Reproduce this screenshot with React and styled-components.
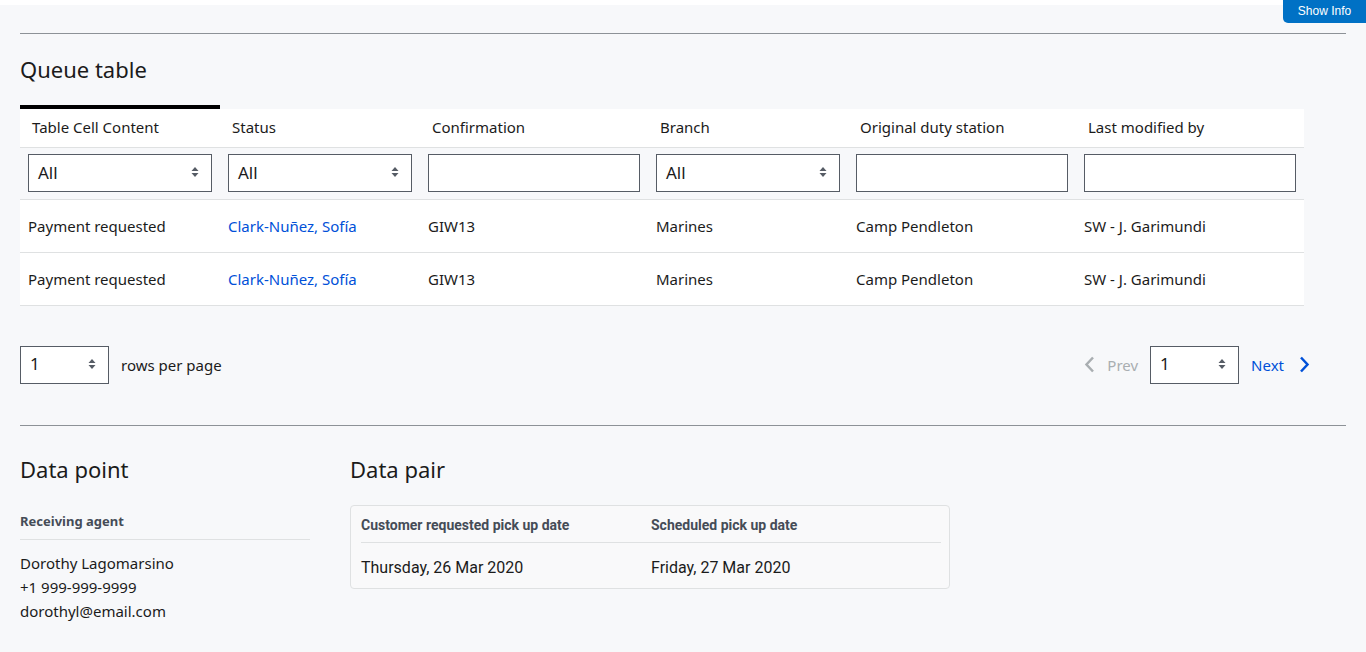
import styled, { createGlobalStyle } from "styled-components";

const GlobalStyle = createGlobalStyle`
  html, body {
    margin: 0;
    padding: 0;
    background: #f7f8fa;
    font-family: "Noto Sans", Inter, sans-serif;
    color: #1b1b1b;
  }
  * { box-sizing: border-box; }
`;

const columns = [
  { label: "Table Cell Content", width: 200, filter: "select", active: true },
  { label: "Status", width: 200, filter: "select" },
  { label: "Confirmation", width: 228, filter: "text" },
  { label: "Branch", width: 200, filter: "select" },
  { label: "Original duty station", width: 228, filter: "text" },
  { label: "Last modified by", width: 228, filter: "text" },
];

const rows = [
  ["Payment requested", "Clark-Nuñez, Sofía", "GIW13", "Marines", "Camp Pendleton", "SW - J. Garimundi"],
  ["Payment requested", "Clark-Nuñez, Sofía", "GIW13", "Marines", "Camp Pendleton", "SW - J. Garimundi"],
];

const Arrows = () => (
  <svg width="8" height="12" viewBox="0 0 8 12">
    <path d="M4 1 L7.5 5 L0.5 5 Z" fill="#565c65" />
    <path d="M4 11 L7.5 7 L0.5 7 Z" fill="#565c65" />
  </svg>
);

const Chevron = ({ dir, color }) => (
  <svg width="11" height="17" viewBox="0 0 11 17">
    <path
      d={dir === "left" ? "M9 1.5 L2.5 8.5 L9 15.5" : "M2 1.5 L8.5 8.5 L2 15.5"}
      fill="none"
      stroke={color}
      strokeWidth="2.5"
    />
  </svg>
);

const App = () => {
  return (
    <>
      <GlobalStyle />
      <TopStrip />
      <ShowInfo>Show Info</ShowInfo>
      <Page>
        <Rule />
        <Heading>Queue table</Heading>
        <Table>
          <colgroup>
            {columns.map((c) => (
              <col key={c.label} style={{ width: c.width }} />
            ))}
          </colgroup>
          <thead>
            <tr>
              {columns.map((c) => (
                <Th key={c.label} $active={c.active}>
                  {c.label}
                </Th>
              ))}
            </tr>
            <FilterRow>
              {columns.map((c) => (
                <FilterCell key={c.label}>
                  {c.filter === "select" ? (
                    <SelectBox>
                      <span>All</span>
                      <Arrows />
                    </SelectBox>
                  ) : (
                    <TextBox />
                  )}
                </FilterCell>
              ))}
            </FilterRow>
          </thead>
          <tbody>
            {rows.map((r, i) => (
              <tr key={i}>
                {r.map((cell, j) => (
                  <Td key={j}>{j === 1 ? <Link>{cell}</Link> : cell}</Td>
                ))}
              </tr>
            ))}
          </tbody>
        </Table>

        <Pagination>
          <PerPage>
            <SmallSelect>
              <span>1</span>
              <Arrows />
            </SmallSelect>
            <PagerText>rows per page</PagerText>
          </PerPage>
          <Pager>
            <PagerButton $disabled>
              <Chevron dir="left" color="#a9aeb1" />
              Prev
            </PagerButton>
            <SmallSelect>
              <span>1</span>
              <Arrows />
            </SmallSelect>
            <PagerButton $next>
              Next
              <Chevron dir="right" color="#0050d8" />
            </PagerButton>
          </Pager>
        </Pagination>

        <Rule />
        <Bottom>
          <DataPoint>
            <Heading $lower>Data point</Heading>
            <Label>Receiving agent</Label>
            <Lines>
              <div>Dorothy Lagomarsino</div>
              <div>+1 999-999-9999</div>
              <div>dorothyl@email.com</div>
            </Lines>
          </DataPoint>
          <DataPair>
            <Heading $lower>Data pair</Heading>
            <PairCard>
              <PairHead>
                <PairLabel>Customer requested pick up date</PairLabel>
                <PairLabel>Scheduled pick up date</PairLabel>
              </PairHead>
              <PairBody>
                <PairValue>Thursday, 26 Mar 2020</PairValue>
                <PairValue>Friday, 27 Mar 2020</PairValue>
              </PairBody>
            </PairCard>
          </DataPair>
        </Bottom>
      </Page>
    </>
  );
};

const TopStrip = styled.div`
  height: 5px;
  background: #ffffff;
`;

const ShowInfo = styled.button`
  position: absolute;
  top: 0;
  right: 0;
  width: 83px;
  height: 23px;
  border: none;
  border-radius: 0 0 0 5px;
  background: #0071c5;
  color: #ffffff;
  font-family: "Liberation Sans", Arial, sans-serif;
  font-size: 12px;
  padding: 0 0 2px 0;
`;

const Page = styled.div`
  padding: 28px 20px 30px 20px;
`;

const Rule = styled.hr`
  margin: 0;
  border: none;
  border-top: 1px solid #8d9297;
`;

const Heading = styled.h2`
  margin: ${(p) => (p.$lower ? "30px 0 0 0" : "22px 0 23px 0")};
  font-size: 22px;
  font-weight: 400;
  line-height: 26px;
  color: #1b1b1b;
`;

const Table = styled.table`
  width: 1284px;
  table-layout: fixed;
  border-collapse: collapse;
  font-size: 15px;
`;

const Th = styled.th`
  height: 40px;
  padding: 0 8px 2px 12px;
  text-align: left;
  font-weight: 400;
  background: #ffffff;
  border-top: 4px solid ${(p) => (p.$active ? "#000000" : "#f7f8fa")};
  border-bottom: 1px solid #dfe1e2;
  vertical-align: middle;
`;

const FilterRow = styled.tr`
  background: #f7f8fa;
`;

const FilterCell = styled.td`
  height: 52px;
  padding: 6px 8px;
  border-bottom: 1px solid #dfe1e2;
`;

const boxStyles = `
  height: 38px;
  border: 1px solid #565c65;
  background: #ffffff;
`;

const SelectBox = styled.div`
  ${boxStyles}
  width: 184px;
  display: flex;
  align-items: center;
  justify-content: space-between;
  padding: 0 12px 2px 9px;
  font-size: 17px;
`;

const TextBox = styled.div`
  ${boxStyles}
  width: 100%;
`;

const Td = styled.td`
  height: 53px;
  padding: 0 8px;
  background: #ffffff;
  border-bottom: 1px solid #dfe1e2;
`;

const Link = styled.span`
  color: #0050d8;
`;

const Pagination = styled.div`
  display: flex;
  justify-content: space-between;
  align-items: center;
  width: 1290px;
  margin: 40px 0 41px 0;
`;

const PerPage = styled.div`
  display: flex;
  align-items: center;
  gap: 12px;
`;

const SmallSelect = styled(SelectBox)`
  width: 89px;
`;

const PagerText = styled.span`
  font-size: 15px;
`;

const Pager = styled.div`
  display: flex;
  align-items: center;
  gap: 12px;
`;

const PagerButton = styled.span`
  display: flex;
  align-items: center;
  gap: ${(p) => (p.$next ? "15px" : "12px")};
  font-size: 15px;
  color: ${(p) => (p.$disabled ? "#a9aeb1" : "#0050d8")};
`;

const Bottom = styled.div`
  display: flex;
  gap: 40px;
`;

const DataPoint = styled.div`
  width: 290px;
`;

const Label = styled.div`
  font-size: 13px;
  font-weight: 700;
  color: #454c57;
  padding-bottom: 9px;
  border-bottom: 1px solid #dfe1e2;
  margin-top: 30px;
`;

const Lines = styled.div`
  margin-top: 11px;
  font-size: 15px;
  line-height: 24px;
`;

const DataPair = styled.div`
  width: 600px;
`;

const PairCard = styled.div`
  border: 1px solid #dfe1e2;
  border-radius: 4px;
  background: #f9f9fa;
  padding: 0 8px 0 10px;
  margin-top: 23px;
  font-family: Roboto, "Noto Sans", sans-serif;
`;

const PairHead = styled.div`
  display: grid;
  grid-template-columns: 290px 1fr;
  padding: 11px 0 9px 0;
  border-bottom: 1px solid #dfe1e2;
`;

const PairLabel = styled.div`
  font-size: 14px;
  font-weight: 700;
  color: #454c57;
`;

const PairBody = styled.div`
  display: grid;
  grid-template-columns: 290px 1fr;
  padding: 15px 0 11px 0;
`;

const PairValue = styled.div`
  font-size: 16px;
`;

export default App;
